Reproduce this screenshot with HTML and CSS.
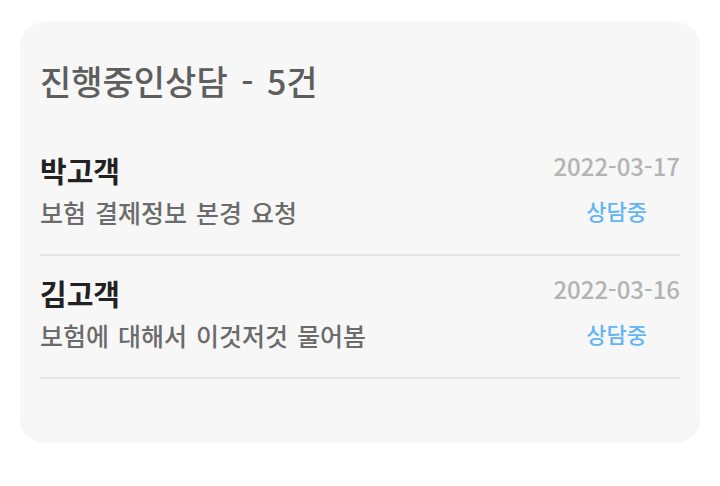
FILE: index.html
```html
<!DOCTYPE html>
<html lang="ko">
<head>
    <meta charset="UTF-8">
    <meta name="viewport" content="width=device-width, initial-scale=1.0">
    <title>진행중인상담</title>
    <link rel="stylesheet" href="styles.css">
</head>
<body>
    <div class="card">
        <h2 class="card-title">진행중인상담 - 5건</h2>
        <ul class="consult-list">
            <li class="consult-item">
                <div class="consult-info">
                    <div class="customer">박고객</div>
                    <div class="subject">보험 결제정보 본경 요청</div>
                </div>
                <div class="consult-meta">
                    <div class="date">2022-03-17</div>
                    <div class="status">상담중</div>
                </div>
            </li>
            <li class="consult-item">
                <div class="consult-info">
                    <div class="customer">김고객</div>
                    <div class="subject">보험에 대해서 이것저것 물어봄</div>
                </div>
                <div class="consult-meta">
                    <div class="date">2022-03-16</div>
                    <div class="status">상담중</div>
                </div>
            </li>
        </ul>
    </div>
</body>
</html>
```

FILE: styles.css
```css
body {
    margin: 0;
    padding: 22px 20px;
    background: #fff;
    font-family: "Noto Sans CJK KR", "Noto Sans", sans-serif;
}

.card {
    height: 421px;
    box-sizing: border-box;
    padding: 0 20px;
    background-color: #f7f7f7;
    border-radius: 24px;
}

.card-title {
    margin: 0 0 29px;
    padding-top: 36px;
    font-size: 34px;
    font-weight: 500;
    line-height: 46px;
    word-spacing: 4px;
    color: #5e5e5e;
}

.consult-list {
    list-style: none;
    margin: 0;
    padding: 0;
}

.consult-item {
    display: flex;
    justify-content: space-between;
    padding: 17px 0 24px;
    border-bottom: 2px solid #e4e4e4;
}

.customer {
    font-size: 29px;
    font-weight: 700;
    line-height: 40px;
    color: #222;
}

.subject {
    margin-top: 4px;
    font-size: 25px;
    font-weight: 500;
    line-height: 36px;
    word-spacing: 2px;
    color: #6b6b6b;
}

.consult-meta {
    text-align: center;
}

.date {
    font-size: 24px;
    font-weight: 500;
    line-height: 32px;
    color: #b3b3b3;
}

.status {
    margin-top: 12px;
    font-size: 22px;
    font-weight: 500;
    line-height: 32px;
    color: #64b5f6;
}
```
